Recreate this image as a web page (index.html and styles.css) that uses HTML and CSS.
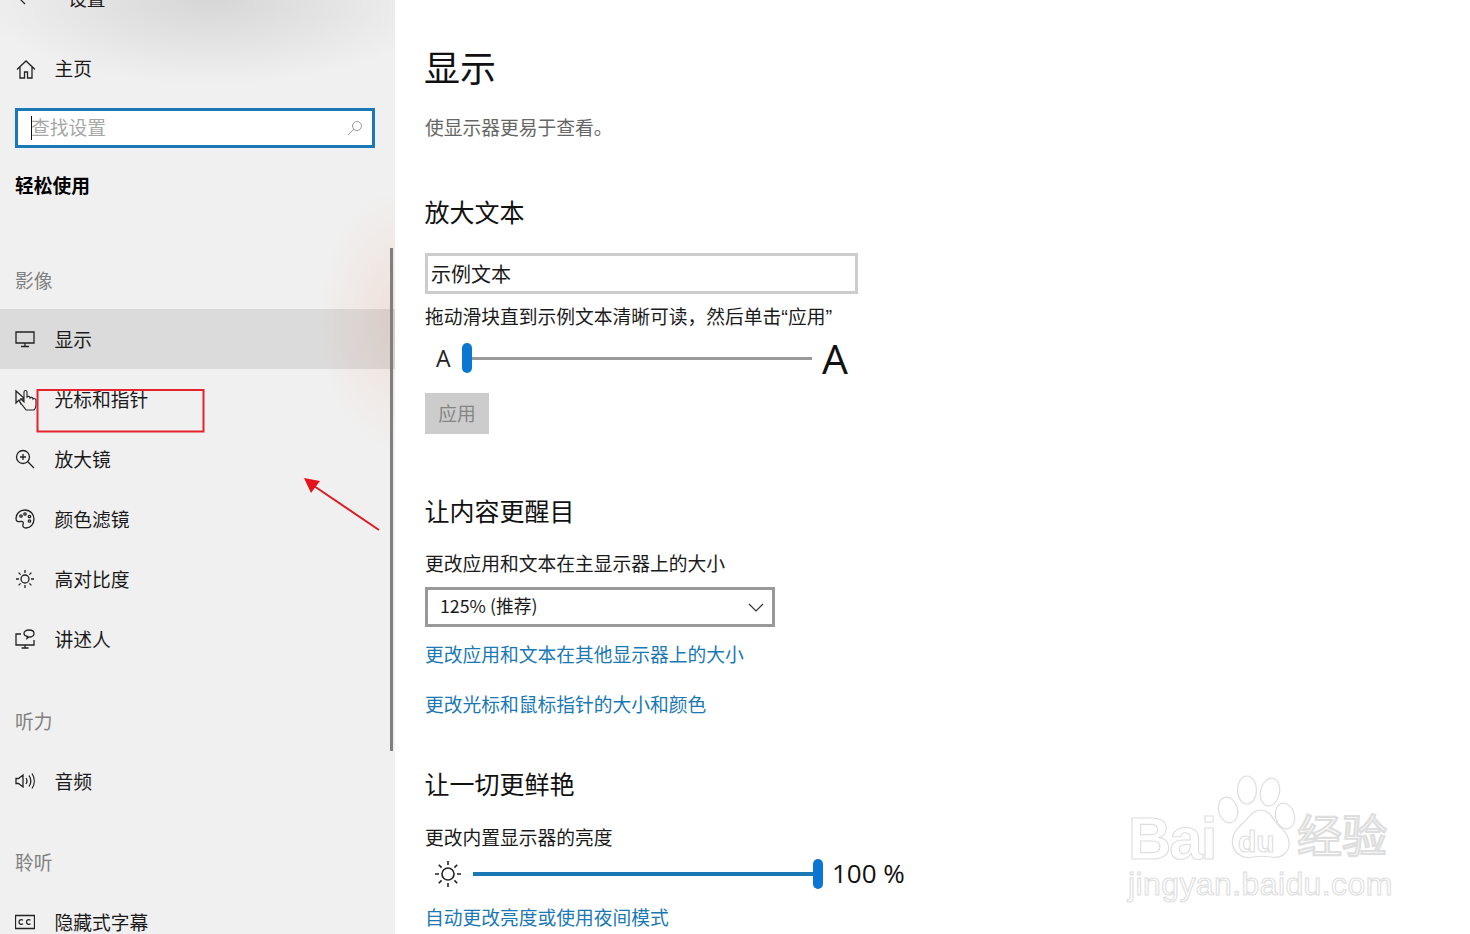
FILE: index.html
```html
<!DOCTYPE html>
<html lang="zh-CN">
<head>
<meta charset="utf-8">
<title>设置</title>
<link rel="stylesheet" href="styles.css">
</head>
<body>
<div class="app">
  <aside class="sidebar">
    <div class="top-bar">
      <svg class="back" viewBox="0 0 12 12"><path d="M8 1 3 6l5 5"/></svg>
      <span>设置</span>
    </div>
    <div class="row home">
      <svg class="ico" viewBox="0 0 20 20"><path d="M2 10.500 11 2l9 8.500M5 8v11h4.500v-6h3v6H17V8"/></svg>
      <span>主页</span>
    </div>
    <div class="search">
      <i class="caret"></i>
      <span class="placeholder">查找设置</span>
      <svg class="search-ico" viewBox="0 0 16 16"><circle cx="10" cy="6" r="4.500"/><path d="M6.800 9.200 1 15"/></svg>
    </div>
    <div class="row home section-title"><span>轻松使用</span></div>
    <div class="row group first"><span>影像</span></div>
    <div class="row active">
      <svg class="ico" viewBox="0 0 20 20"><path d="M1 3h18v11H1zM10 14v3M6 17.500h8"/></svg>
      <span>显示</span>
    </div>
    <div class="row">
      <svg class="ico" viewBox="0 0 20 20"><path d="M1 2v12l3-3 2 4 2-1-2-4h4z"/></svg>
      <span>光标和指针</span>
    </div>
    <div class="row">
      <svg class="ico" viewBox="0 0 20 20"><circle cx="8" cy="8" r="6.500"/><path d="M8 5v6M5 8h6M12.800 12.800 19 19"/></svg>
      <span>放大镜</span>
    </div>
    <div class="row">
      <svg class="ico" viewBox="0 0 20 20"><path d="M10 1C4.500 1 1 5 1 9.500c0 3 2.500 3.500 4.500 3 2.500-.5 3.500 1 2.500 3-.8 1.800.5 3.500 3 3.500 5 0 8-4.500 8-9S15.500 1 10 1z"/><circle cx="6" cy="7" r="1.200"/><circle cx="10" cy="5" r="1.200"/><circle cx="14.500" cy="7.500" r="1.200"/><circle cx="14.500" cy="12" r="1.200"/></svg>
      <span>颜色滤镜</span>
    </div>
    <div class="row">
      <svg class="ico" viewBox="0 0 20 20"><circle cx="10" cy="10" r="4"/><path d="M10 1v3M10 16v3M1 10h3M16 10h3M3.600 3.600l2 2M14.400 14.400l2 2M3.600 16.400l2-2M14.400 5.600l2-2"/></svg>
      <span>高对比度</span>
    </div>
    <div class="row">
      <svg class="ico" viewBox="0 0 20 20"><path d="M6 5H1v11h18v-5M10 16v3M6.500 19h7"/><path d="M14 1c3 0 5 1.500 5 3.500S17 8 14 8l-2 1.500.5-2C10.500 7 9 6 9 4.500 9 2.500 11 1 14 1z"/></svg>
      <span>讲述人</span>
    </div>
    <div class="row group"><span>听力</span></div>
    <div class="row">
      <svg class="ico" viewBox="0 0 20 20"><path d="M1 7.500v5h2.500L8 16V4L3.500 7.500zM11 7c1.200 1.800 1.200 4.200 0 6M14 4.500c2.200 3.300 2.200 7.700 0 11M17 2.500c3 4.500 3 10.500 0 15"/></svg>
      <span>音频</span>
    </div>
    <div class="row group last"><span>聆听</span></div>
    <div class="row">
      <svg class="ico" viewBox="0 0 20 20"><path d="M.5 3.500h19v13H.5z"/><path d="M8 8.200C6 7 4 8 4 10s2 3 4 1.800M15.500 8.200c-2-1.200-4-.2-4 1.800s2 3 4 1.800"/></svg>
      <span>隐藏式字幕</span>
    </div>
    <i class="scrollbar"></i>
  </aside>

  <main class="content">
    <h1>显示</h1>
    <p class="subtitle">使显示器更易于查看。</p>

    <h2 class="h-text">放大文本</h2>
    <div class="sample">示例文本</div>
    <p class="text hint">拖动滑块直到示例文本清晰可读，然后单击<span class="q">“</span>应用<span class="q">”</span></p>
    <div class="size-slider">
      <span class="a-small">A</span>
      <div class="track grey"><i class="thumb start"></i></div>
      <span class="a-big">A</span>
    </div>
    <div class="apply">应用</div>

    <h2 class="h-content">让内容更醒目</h2>
    <p class="text label-size">更改应用和文本在主显示器上的大小</p>
    <div class="select">
      <span class="select-value">125% (推荐)</span>
      <svg class="chev" viewBox="0 0 16 9"><path d="M1 1l7 7 7-7"/></svg>
    </div>
    <a class="text link l1">更改应用和文本在其他显示器上的大小</a>
    <a class="text link l2">更改光标和鼠标指针的大小和颜色</a>

    <h2 class="h-vivid">让一切更鲜艳</h2>
    <p class="text label-bright">更改内置显示器的亮度</p>
    <div class="bright-slider">
      <svg class="sun" viewBox="0 0 26 26"><circle cx="13" cy="13" r="6"/><path d="M13 0v4M13 22v4M0 13h4M22 13h4M3.800 3.800l2.800 2.800M19.400 19.400l2.800 2.800M3.800 22.200l2.800-2.800M19.400 6.600l2.800-2.800"/></svg>
      <div class="track blue"><i class="thumb end"></i></div>
      <span class="percent">100 %</span>
    </div>
    <a class="text link l3">自动更改亮度或使用夜间模式</a>
  </main>
</div>

<svg class="annotations" viewBox="0 0 1470 934">
  <path class="hand" d="M26 410c-2-3-5-6-6-8-1-1 0-3 2-2l2 2v-10c0-2 3-2 3 0v5c1-1 3-1 3 1 1-1 3-1 3 1 1-1 3 0 3 1v5c0 2-1 4-2 5z"/>
  <rect class="mark-box" x="37.500" y="390" width="166" height="41.500"/>
  <path class="mark-line" d="M379 530 314 486"/>
  <path class="mark-head" d="M304 478 320 481 311 493z"/>
</svg>

<div class="watermark">
  <span class="wm wm-bai">Bai</span>
  <svg class="wm-paw" viewBox="0 0 80 90">
    <ellipse cx="14" cy="35" rx="9.500" ry="13" transform="rotate(-15 14 35)"/>
    <ellipse cx="33" cy="15" rx="9.500" ry="14"/>
    <ellipse cx="56" cy="17" rx="9.500" ry="14" transform="rotate(12 56 17)"/>
    <ellipse cx="71" cy="41" rx="9.500" ry="13" transform="rotate(-15 71 41)"/>
    <path d="M47 35c-9 0-13 9-20 15C20 56 17 63 19 71c2 9 12 13 20 11 6-1 12-1 18 0 9 2 17-3 18-12 1-8-4-14-10-19-6-6-9-16-18-16z"/>
  </svg>
  <span class="wm wm-du">du</span>
  <span class="wm wm-cn">经验</span>
  <span class="wm wm-url">jingyan.baidu.com</span>
</div>
</body>
</html>
```
FILE: styles.css
```css
* { box-sizing: border-box; }
html, body { margin: 0; height: 100%; overflow: hidden; background: #fff; }
body {
  font-family: "Noto Sans CJK SC", "Noto Sans", sans-serif;
  font-size: 18.75px;
  color: #1a1a1a;
  font-weight: 400;
}
.app { display: flex; height: 934px; overflow: hidden; }

.sidebar {
  position: relative;
  flex: 0 0 395px;
  height: 934px;
  overflow: hidden;
  background:
    radial-gradient(ellipse 75px 130px at 395px 320px, #efe0da 0%, rgba(239,224,218,0) 100%),
    radial-gradient(ellipse 230px 85px at 210px 0, #d6d6d6 0%, rgba(214,214,214,0) 100%),
    #f0f0f0;
}
.top-bar {
  display: flex;
  align-items: center;
  height: 40px;
  margin-top: -21px;
  margin-bottom: 20px;
  padding-left: 17px;
}
.top-bar span { margin-left: 39px; margin-bottom: 3px; }
.back { width: 12px; height: 12px; fill: none; stroke: #222; stroke-width: 1.200; }

.row {
  display: flex;
  align-items: center;
  height: 60px;
  padding-left: 15px;
}
.row > span { margin-bottom: 1px; }
.row.home > span { margin-bottom: 3px; }
.ico {
  flex: 0 0 20px;
  width: 20px;
  height: 20px;
  margin-right: 19.500px;
  fill: none;
  stroke: #222;
  stroke-width: 1.300;
}
.search {
  position: relative;
  display: flex;
  align-items: center;
  width: 360px;
  height: 40px;
  margin: 9px 0 8px 15px;
  padding-left: 13px;
  background: #fff;
  border: 3px solid #1a78b4;
}
.caret { position: absolute; left: 13px; top: 5px; width: 1px; height: 24px; background: #111; }
.placeholder { color: #a6a6a6; margin-bottom: 3px; }
.search-ico {
  position: absolute;
  right: 9px;
  top: 9px;
  width: 16px;
  height: 16px;
  fill: none;
  stroke: #999;
  stroke-width: 1;
}
.section-title { font-weight: 700; color: #000; margin-bottom: 35px; }
.group { color: #808080; height: 60px; margin-top: 22px; }
.group.first { margin-top: 0; height: 58px; }
.group.last { margin-top: 21px; }
.active { background: rgba(0, 0, 0, .085); }
.scrollbar {
  position: absolute;
  left: 390px;
  top: 248px;
  width: 3px;
  height: 503px;
  background: #7f7f7f;
}

.content { flex: 1; padding-left: 30px; }
h1, h2, p { margin: 0; font-weight: 400; }
h1 { height: 60px; margin: 38px 0 0 -1px; font-size: 36px; line-height: 56px; color: #111; }
.subtitle { height: 30px; margin-top: 15px; line-height: 28px; color: #666; }
h2 { height: 40px; font-size: 25px; line-height: 36px; color: #111; margin-left: -.5px; }
.text { display: block; height: 30px; line-height: 28px; }
.q { font-family: "Liberation Sans", sans-serif; font-size: 20px; }
.h-text { margin-top: 50px; }
.sample {
  width: 433px;
  height: 41px;
  margin-top: 20px;
  padding-left: 3px;
  line-height: 35px;
  border: 3px solid #ccc;
  font-size: 20px;
}
.hint { margin-top: 8px; }
.size-slider { display: flex; align-items: center; height: 40px; margin-top: 6px; }
.a-small { width: 37px; padding-left: 11px; font: 400 23px "Open Sans", sans-serif; color: #222; }
.track { position: relative; height: 3px; }
.track.grey { width: 350px; background: #999; }
.track.blue { width: 342px; height: 4px; background: #1a78b4; }
.thumb {
  position: absolute;
  top: 50%;
  width: 10px;
  height: 30px;
  margin-top: -15px;
  border-radius: 5px;
  background: #0a78d2;
}
.thumb.start { left: 0; }
.thumb.end { right: -8px; }
.a-big { margin-left: 10px; font: 400 41px/1 "Open Sans", sans-serif; color: #111; }
.apply {
  width: 64px;
  height: 41px;
  margin-top: 15px;
  background: #ccc;
  color: #858585;
  text-align: center;
  line-height: 39px;
}
.h-content { margin-top: 58px; }
.label-size { margin-top: 17px; }
.select {
  display: flex;
  align-items: center;
  justify-content: space-between;
  width: 350px;
  height: 40px;
  margin-top: 8px;
  padding: 0 8px 0 12px;
  border: 3px solid #999;
}
.select-value { font-size: 17.750px; margin-bottom: 4px; }
.chev { width: 16px; height: 9px; fill: none; stroke: #333; stroke-width: 1.200; }
.link { color: #1a78b4; cursor: pointer; }
.l1 { margin-top: 13px; }
.l2 { margin-top: 20px; }
.h-vivid { margin-top: 45px; }
.label-bright { margin-top: 18px; }
.bright-slider { display: flex; align-items: center; height: 40px; margin-top: 1px; }
.sun { width: 26px; height: 26px; margin: 0 12px 0 10px; fill: none; stroke: #222; stroke-width: 1.600; }
.percent { margin: 0 0 2px 17px; font: 400 26px "Open Sans", sans-serif; color: #111; }
.l3 { margin-top: 9px; }

.annotations { position: absolute; left: 0; top: 0; width: 1470px; height: 934px; pointer-events: none; }
.hand { fill: #f4f1f1; stroke: #222; stroke-width: 1.100; }
.mark-box { fill: none; stroke: #e5232b; stroke-width: 2; }
.mark-line { fill: none; stroke: #dc1c22; stroke-width: 2; }
.mark-head { fill: #e3141c; }

.watermark { position: absolute; left: 1125px; top: 775px; width: 275px; height: 130px; }
.wm {
  position: absolute;
  color: #fff;
  font-family: "Liberation Sans", sans-serif;
  font-weight: 700;
  -webkit-text-stroke: 1.100px #dedede;
  line-height: 1;
}
.wm-bai { left: 3px; top: 34px; font-size: 60px; letter-spacing: -2px; }
.wm-paw {
  position: absolute;
  left: 89px;
  top: 0;
  width: 80px;
  height: 90px;
  overflow: visible;
  fill: #fff;
  stroke: #dedede;
  stroke-width: 1.200;
}
.wm-du { left: 113px; top: 52px; font-size: 30px; }
.wm-cn { left: 172px; top: 40px; font-size: 45px; -webkit-text-stroke-width: .8px; }
.wm-url { left: 3px; top: 93px; font-size: 32px; font-weight: 400; letter-spacing: .4px; }
```
